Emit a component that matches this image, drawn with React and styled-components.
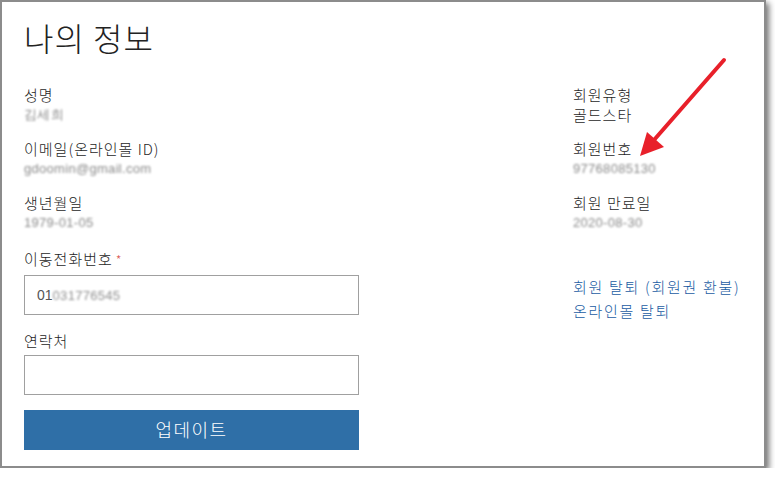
import React from "react";
import styled, { createGlobalStyle } from "styled-components";

const Global = createGlobalStyle`
  html, body { margin: 0; padding: 0; background: #ffffff; }
  body { font-family: "Noto Sans CJK KR", "Noto Sans", sans-serif; color: #333; }
`;

const Frame = styled.div`
  position: relative;
  box-sizing: border-box;
  width: 766px;
  height: 468px;
  background: #fff;
  border: 2px solid #8c8c8c;
  box-shadow: 3px 3px 6px rgba(0, 0, 0, 0.55);
  padding: 14px 0 0 22px;
`;

const Title = styled.h1`
  margin: 0;
  font-size: 32px;
  font-weight: 300;
  line-height: 42px;
  color: #222;
  letter-spacing: 1px;
`;

const Columns = styled.div`
  display: flex;
  margin-top: 27px;
`;

const LeftCol = styled.div`
  width: 335px;
  display: flex;
  flex-direction: column;
`;

const RightCol = styled.div`
  margin-left: 214px;
  display: flex;
  flex-direction: column;
`;

const Group = styled.div`
  display: flex;
  flex-direction: column;
  margin-bottom: ${(p) => p.$mb ?? 14}px;
`;

const Label = styled.div`
  font-size: 15px;
  font-weight: 300;
  line-height: 20px;
  letter-spacing: 1px;
  color: #1e1e1e;
`;

const Req = styled.span`
  color: #d9534f;
  margin-left: 3px;
  font-size: 13px;
`;

const Value = styled.div`
  font-family: "Liberation Sans", Arial, sans-serif;
  font-size: 13px;
  line-height: 20px;
  letter-spacing: 0.3px;
  color: #8a8a8a;
  filter: blur(0.9px);
`;

const Plain = styled(Label)``;

const Input = styled.div`
  box-sizing: border-box;
  height: 40px;
  width: 335px;
  border: 1px solid #a0a0a0;
  margin-top: ${(p) => p.$mt}px;
  padding: 0 12px;
  display: flex;
  align-items: center;
  font-family: "Liberation Sans", Arial, sans-serif;
  font-size: 14px;
  color: #555;
`;

const Blurred = styled.span`
  display: inline-block;
  color: #909090;
  font-size: 13px;
  letter-spacing: 0.3px;
  filter: blur(0.9px);
`;

const Button = styled.button`
  box-sizing: border-box;
  margin-top: 15px;
  width: 335px;
  height: 40px;
  border: none;
  background: #2f6fa7;
  color: #fff;
  font-family: "Noto Sans CJK KR", sans-serif;
  font-size: 18px;
  font-weight: 300;
  letter-spacing: 1.5px;
  padding: 0 0 2px;
`;

const Links = styled.div`
  display: flex;
  flex-direction: column;
  margin-top: 42px;
`;

const Link = styled.a`
  font-size: 15px;
  font-weight: 300;
  line-height: 24px;
  letter-spacing: 1.7px;
  color: #1a5ca3;
  text-decoration: none;
`;

const Arrow = styled.svg`
  position: absolute;
  left: 0;
  top: 0;
  pointer-events: none;
`;

export default function App() {
  return (
    <>
      <Global />
      <Frame>
        <Title>나의 정보</Title>
        <Columns>
          <LeftCol>
            <Group>
              <Label>성명</Label>
              <Value>김세희</Value>
            </Group>
            <Group>
              <Label>이메일(온라인몰 ID)</Label>
              <Value>gdoomin@gmail.com</Value>
            </Group>
            <Group $mb={16}>
              <Label>생년월일</Label>
              <Value>1979-01-05</Value>
            </Group>
            <Label>
              이동전화번호<Req>*</Req>
            </Label>
            <Input $mt={5}>
              01<Blurred>031776545</Blurred>
            </Input>
            <Group $mb={0} style={{ marginTop: 16 }}>
              <Label>연락처</Label>
            </Group>
            <Input $mt={4} />
            <Button>업데이트</Button>
          </LeftCol>
          <RightCol>
            <Group>
              <Label>회원유형</Label>
              <Plain>골드스타</Plain>
            </Group>
            <Group>
              <Label>회원번호</Label>
              <Value>97768085130</Value>
            </Group>
            <Group $mb={0}>
              <Label>회원 만료일</Label>
              <Value>2020-08-30</Value>
            </Group>
            <Links>
              <Link>회원 탈퇴 (회원권 환불)</Link>
              <Link>온라인몰 탈퇴</Link>
            </Links>
          </RightCol>
        </Columns>
        <Arrow width="766" height="468" viewBox="0 0 766 468">
          <line x1="722" y1="58" x2="652" y2="138" stroke="#e8202a" strokeWidth="4" strokeLinecap="round" />
          <polygon points="638,154 645,130 662,145" fill="#e8202a" />
        </Arrow>
      </Frame>
    </>
  );
}
